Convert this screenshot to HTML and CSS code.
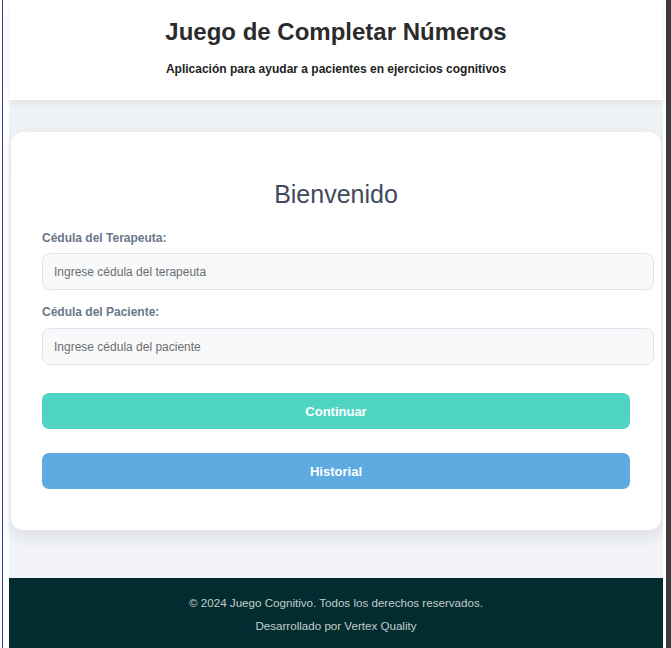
FILE: index.html
```html
<!DOCTYPE html>
<html lang="es">
<head>
<meta charset="utf-8">
<title>Juego de Completar Números</title>
<link rel="stylesheet" href="styles.css">
</head>
<body>
<div class="frame">
  <div class="edge-left"><span class="edge-line"></span></div>
  <div class="page">
    <header class="site-header">
      <h1 class="title">Juego de Completar Números</h1>
      <p class="subtitle">Aplicación para ayudar a pacientes en ejercicios cognitivos</p>
    </header>
    <main class="main">
      <section class="card">
        <h2 class="welcome">Bienvenido</h2>
        <form class="form">
          <label class="label" for="ter">Cédula del Terapeuta:</label>
          <input class="input" id="ter" type="text" placeholder="Ingrese cédula del terapeuta">
          <label class="label label-2" for="pac">Cédula del Paciente:</label>
          <input class="input" id="pac" type="text" placeholder="Ingrese cédula del paciente">
          <button class="btn btn-continue" type="button">Continuar</button>
          <button class="btn btn-history" type="button">Historial</button>
        </form>
      </section>
    </main>
    <footer class="site-footer">
      <p class="foot-line">© 2024 Juego Cognitivo. Todos los derechos reservados.</p>
      <p class="foot-line">Desarrollado por Vertex Quality</p>
    </footer>
  </div>
  <div class="edge-right"><span class="edge-dark"></span></div>
</div>
</body>
</html>
```
FILE: styles.css
```css
* { box-sizing: border-box; }
html, body { margin: 0; padding: 0; }
body {
  font-family: "Liberation Sans", Arial, sans-serif;
  background: #ffffff;
  overflow: hidden;
}
.frame {
  display: flex;
  height: 648px;
  width: 671px;
}
.edge-left {
  width: 9px;
  flex: none;
  background: #ffffff;
  display: flex;
}
.edge-line {
  margin-left: 2px;
  width: 1px;
  background: #2e3a9c;
}
.edge-right {
  width: 8px;
  flex: none;
  background: #ffffff;
  display: flex;
  justify-content: flex-end;
}
.edge-dark {
  width: 5px;
  background: #3b3b3b;
}
.page {
  width: 654px;
  flex: none;
  display: flex;
  flex-direction: column;
  background: linear-gradient(#e8ecf0, #eff2f5 60px, #f2f4f7);
}
.site-header {
  height: 100px;
  flex: none;
  background: #ffffff;
  text-align: center;
  padding-top: 18px;
  box-shadow: 0 2px 8px rgba(0, 0, 0, 0.07);
  position: relative;
  z-index: 1;
}
.title {
  margin: 0;
  font-size: 24px;
  line-height: 28px;
  font-weight: bold;
  color: #2b2b2b;
}
.subtitle {
  margin: 16px 0 0;
  font-size: 12px;
  line-height: 15px;
  font-weight: bold;
  color: #222222;
}
.main {
  flex: none;
  padding: 32px 2px 48px 2px;
}
.card {
  background: #ffffff;
  border-radius: 12px;
  box-shadow: 0 6px 16px rgba(30, 40, 60, 0.11);
  padding: 48px 31px 41px;
  height: 398px;
}
.welcome {
  margin: 0 0 23px;
  text-align: center;
  font-size: 25px;
  line-height: 28px;
  font-weight: normal;
  color: #3f4a5a;
}
.form {
  display: flex;
  flex-direction: column;
  align-items: flex-start;
}
.label {
  font-size: 12px;
  line-height: 14px;
  font-weight: bold;
  color: #6b778a;
  margin-bottom: 8px;
}
.label-2 { margin-top: 15px; margin-bottom: 9px; }
.input {
  box-sizing: content-box;
  width: 100%;
  height: 35px;
  padding: 0 11px;
  border: 1px solid #e1e5eb;
  border-radius: 8px;
  background: #f7f9fb;
  font-family: "Liberation Sans", Arial, sans-serif;
  font-size: 12px;
  color: #333333;
  outline: none;
}
.input::placeholder { color: #6e6e6e; }
.btn {
  width: 100%;
  height: 36px;
  border: none;
  border-radius: 7px;
  color: #ffffff;
  font-family: "Liberation Sans", Arial, sans-serif;
  font-size: 13px;
  font-weight: bold;
}
.btn-continue { background: #4fd4c3; margin-top: 28px; }
.btn-history { background: #5dabe1; margin-top: 24px; }
.site-footer {
  flex: 1;
  background: #022c2f;
  text-align: center;
  padding-top: 18px;
}
.foot-line {
  margin: 0 0 9px;
  font-size: 11.6px;
  line-height: 14px;
  color: #c4cccc;
}
```
